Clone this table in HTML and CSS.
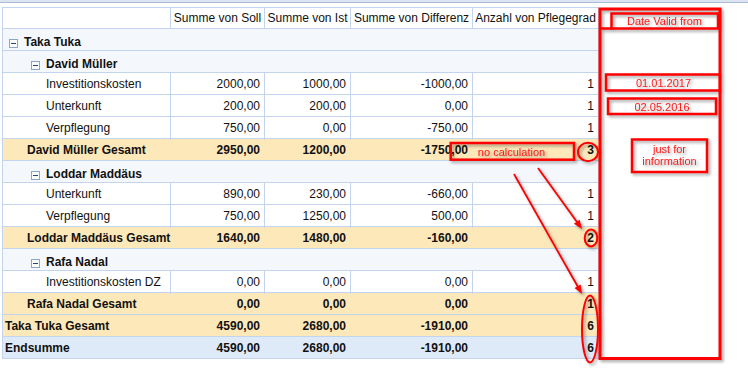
FILE: index.html
```html
<!DOCTYPE html>
<html lang="de">
<head>
<meta charset="utf-8">
<title>Pivot</title>
<link rel="stylesheet" href="styles.css">
</head>
<body>
<div class="page">
  <div class="topbar"></div>
  <div class="pivot">
    <div class="row head">
      <div class="cell"></div>
      <div class="cell">Summe von Soll</div>
      <div class="cell">Summe von Ist</div>
      <div class="cell">Summe von Differenz</div>
      <div class="cell">Anzahl von Pflegegrad</div>
    </div>

    <div class="row group">
      <div class="cell span lvl1"><svg class="tog" width="9" height="9" viewBox="0 0 9 9"><rect x="0.5" y="0.5" width="8" height="8" fill="#fbfcfe" stroke="#8fa5c4"/><line x1="2" y1="4.5" x2="7" y2="4.5" stroke="#24457a"/></svg>Taka Tuka</div>
    </div>
    <div class="row group">
      <div class="cell span lvl2"><svg class="tog" width="9" height="9" viewBox="0 0 9 9"><rect x="0.5" y="0.5" width="8" height="8" fill="#fbfcfe" stroke="#8fa5c4"/><line x1="2" y1="4.5" x2="7" y2="4.5" stroke="#24457a"/></svg>David Müller</div>
    </div>
    <div class="row data">
      <div class="cell label">Investitionskosten</div>
      <div class="cell num">2000,00</div>
      <div class="cell num">1000,00</div>
      <div class="cell num">-1000,00</div>
      <div class="cell num">1</div>
    </div>
    <div class="row data">
      <div class="cell label">Unterkunft</div>
      <div class="cell num">200,00</div>
      <div class="cell num">200,00</div>
      <div class="cell num">0,00</div>
      <div class="cell num">1</div>
    </div>
    <div class="row data">
      <div class="cell label">Verpflegung</div>
      <div class="cell num">750,00</div>
      <div class="cell num">0,00</div>
      <div class="cell num">-750,00</div>
      <div class="cell num">1</div>
    </div>
    <div class="row sub">
      <div class="cell label">David Müller Gesamt</div>
      <div class="cell num">2950,00</div>
      <div class="cell num">1200,00</div>
      <div class="cell num">-1750,00</div>
      <div class="cell num">3</div>
    </div>

    <div class="row group">
      <div class="cell span lvl2"><svg class="tog" width="9" height="9" viewBox="0 0 9 9"><rect x="0.5" y="0.5" width="8" height="8" fill="#fbfcfe" stroke="#8fa5c4"/><line x1="2" y1="4.5" x2="7" y2="4.5" stroke="#24457a"/></svg>Loddar Maddäus</div>
    </div>
    <div class="row data">
      <div class="cell label">Unterkunft</div>
      <div class="cell num">890,00</div>
      <div class="cell num">230,00</div>
      <div class="cell num">-660,00</div>
      <div class="cell num">1</div>
    </div>
    <div class="row data">
      <div class="cell label">Verpflegung</div>
      <div class="cell num">750,00</div>
      <div class="cell num">1250,00</div>
      <div class="cell num">500,00</div>
      <div class="cell num">1</div>
    </div>
    <div class="row sub">
      <div class="cell label">Loddar Maddäus Gesamt</div>
      <div class="cell num">1640,00</div>
      <div class="cell num">1480,00</div>
      <div class="cell num">-160,00</div>
      <div class="cell num">2</div>
    </div>

    <div class="row group">
      <div class="cell span lvl2"><svg class="tog" width="9" height="9" viewBox="0 0 9 9"><rect x="0.5" y="0.5" width="8" height="8" fill="#fbfcfe" stroke="#8fa5c4"/><line x1="2" y1="4.5" x2="7" y2="4.5" stroke="#24457a"/></svg>Rafa Nadal</div>
    </div>
    <div class="row data">
      <div class="cell label">Investitionskosten DZ</div>
      <div class="cell num">0,00</div>
      <div class="cell num">0,00</div>
      <div class="cell num">0,00</div>
      <div class="cell num">1</div>
    </div>
    <div class="row sub">
      <div class="cell label">Rafa Nadal Gesamt</div>
      <div class="cell num">0,00</div>
      <div class="cell num">0,00</div>
      <div class="cell num">0,00</div>
      <div class="cell num">1</div>
    </div>
    <div class="row sub top">
      <div class="cell label">Taka Tuka Gesamt</div>
      <div class="cell num">4590,00</div>
      <div class="cell num">2680,00</div>
      <div class="cell num">-1910,00</div>
      <div class="cell num">6</div>
    </div>
    <div class="row grand">
      <div class="cell label">Endsumme</div>
      <div class="cell num">4590,00</div>
      <div class="cell num">2680,00</div>
      <div class="cell num">-1910,00</div>
      <div class="cell num">6</div>
    </div>
  </div>

  <svg class="notes" width="748" height="369" viewBox="0 0 748 369">
    <g fill="none" stroke="#ff0000">
      <rect x="600" y="9" width="120" height="349.5" stroke-width="3"/>
      <rect x="611.5" y="13.5" width="106.5" height="15" stroke-width="2.5"/>
      <line x1="600" y1="28.5" x2="612" y2="28.5" stroke-width="2.5"/>
      <rect x="606" y="74.5" width="114" height="16" stroke-width="2.5"/>
      <rect x="608" y="98.5" width="108" height="15.5" stroke-width="2.5"/>
      <rect x="632" y="139.5" width="75" height="32.5" stroke-width="2.5"/>
      <rect x="450.7" y="143" width="123.3" height="16.7" stroke-width="2.5"/>
      <ellipse cx="588" cy="152" rx="10" ry="9.2" stroke-width="2"/>
      <ellipse cx="591" cy="238" rx="6.3" ry="8.4" stroke-width="2"/>
      <ellipse cx="590" cy="329" rx="8" ry="33.4" stroke-width="2"/>
      <line x1="538" y1="168" x2="577" y2="222" stroke-width="1.8"/>
      <line x1="514" y1="174" x2="578" y2="287" stroke-width="1.8"/>
    </g>
    <g fill="#ff0000">
      <polygon points="582,229 573.9,223.7 579.6,219.7"/>
      <polygon points="582,294 574.5,287.9 580.6,284.4"/>
    </g>
    <g class="note-text" fill="#ff1a1a" text-anchor="middle">
      <text x="664.5" y="24.5">Date Valid from</text>
      <text x="663.5" y="86.5">01.01.2017</text>
      <text x="662" y="110.5">02.05.2016</text>
      <text x="669.5" y="152.5">just for</text>
      <text x="669.5" y="165">information</text>
      <text x="511.5" y="156">no calculation</text>
    </g>
  </svg>
</div>
</body>
</html>
```

FILE: styles.css
```css
* { box-sizing: border-box; }

html, body {
  margin: 0;
  padding: 0;
  background: #ffffff;
}

.page {
  position: relative;
  width: 748px;
  height: 369px;
  overflow: hidden;
  font-family: "Liberation Sans", Arial, sans-serif;
  font-size: 12px;
  color: #111111;
}

.topbar {
  height: 3px;
  background: #dbe4f0;
  border-bottom: 1px solid #a9bcd6;
}

.pivot {
  margin: 4px 0 0 2px;
  width: 597px;
  border-top: 1px solid #c3d5ee;
  border-left: 1px solid #c3d5ee;
}

.row {
  display: grid;
  grid-template-columns: 168px 94px 86px 122px 126px;
  height: 22px;
  border-bottom: 1px solid #c3d5ee;
}

.cell {
  border-right: 1px solid #c3d5ee;
  line-height: 23px;
  white-space: nowrap;
  overflow: visible;
}

.head {
  height: 21px;
  background: #ffffff;
}

.head .cell {
  line-height: 20px;
  text-align: center;
}

.group {
  background: #f4f8fd;
}

.group .span {
  grid-column: 1 / -1;
  font-weight: bold;
  display: flex;
  align-items: center;
  padding-top: 2px;
}

.lvl1 { padding-left: 6px; }
.lvl2 { padding-left: 28px; }

.tog {
  flex: none;
  margin-right: 6px;
  margin-top: 1px;
}

.data { background: #ffffff; }

.data .label { padding-left: 43px; }

.num {
  text-align: right;
  padding-right: 4px;
}

.sub {
  background: #fde8ba;
  font-weight: bold;
}

.sub .cell,
.grand .cell {
  border-right-color: transparent;
}

.sub .label { padding-left: 24px; }
.sub.top .label { padding-left: 2px; }

.grand {
  background: #deeaf8;
  font-weight: bold;
}

.grand .label { padding-left: 2px; }

.notes {
  position: absolute;
  top: 0;
  left: 0;
  pointer-events: none;
  filter: drop-shadow(2px 2px 1.5px rgba(0, 0, 0, 0.35));
}

.note-text {
  font-family: "Liberation Sans", Arial, sans-serif;
  font-size: 11px;
}
```
